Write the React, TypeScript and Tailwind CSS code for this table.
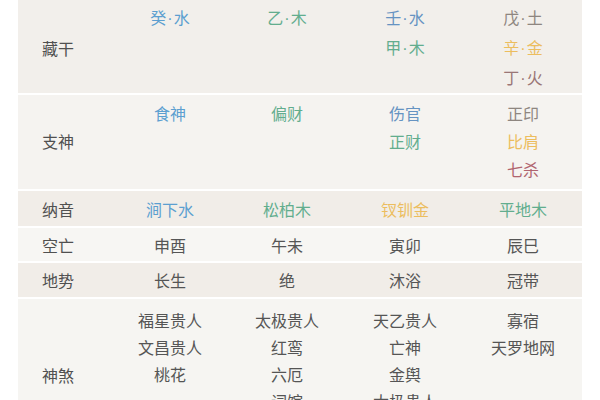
import React from "react";

type Item = { t: string; c: string };

const BLUE = "text-[#5c9fd0]";
const SLATE = "text-[#6693c2]";
const GREEN = "text-[#62ad8e]";
const GOLD = "text-[#ecbd5e]";
const EARTH = "text-[#8e8680]";
const FIRE = "text-[#9a7676]";
const RED = "text-[#b0646e]";
const DARK = "text-[#555555]";

type Row = {
  label: string;
  bg: string;
  pad: string;
  lh: string;
  cols: Item[][];
};

const rows: Row[] = [
  {
    label: "藏干",
    bg: "bg-[#f2efeb]",
    pad: "pt-[3px] pb-[6px] h-[93px]",
    lh: "leading-[28px]",
    cols: [
      [{ t: "癸·水", c: BLUE }],
      [{ t: "乙·木", c: GREEN }],
      [
        { t: "壬·水", c: SLATE },
        { t: "甲·木", c: GREEN },
      ],
      [
        { t: "戊·土", c: EARTH },
        { t: "辛·金", c: GOLD },
        { t: "丁·火", c: FIRE },
      ],
    ],
  },
  {
    label: "支神",
    bg: "bg-[#f5f3f0]",
    pad: "pt-[4px] pb-[6px] h-[94px]",
    lh: "leading-[28px]",
    cols: [
      [{ t: "食神", c: BLUE }],
      [{ t: "偏财", c: GREEN }],
      [
        { t: "伤官", c: SLATE },
        { t: "正财", c: GREEN },
      ],
      [
        { t: "正印", c: EARTH },
        { t: "比肩", c: GOLD },
        { t: "七杀", c: RED },
      ],
    ],
  },
  {
    label: "纳音",
    bg: "bg-[#f1ede8]",
    pad: "h-[35px] items-center",
    lh: "leading-[28px]",
    cols: [
      [{ t: "涧下水", c: BLUE }],
      [{ t: "松柏木", c: GREEN }],
      [{ t: "钗钏金", c: GOLD }],
      [{ t: "平地木", c: GREEN }],
    ],
  },
  {
    label: "空亡",
    bg: "bg-[#f7f6f3]",
    pad: "h-[33px] items-center",
    lh: "leading-[28px]",
    cols: [
      [{ t: "申酉", c: DARK }],
      [{ t: "午未", c: DARK }],
      [{ t: "寅卯", c: DARK }],
      [{ t: "辰巳", c: DARK }],
    ],
  },
  {
    label: "地势",
    bg: "bg-[#f1ede8]",
    pad: "h-[34px] items-center",
    lh: "leading-[28px]",
    cols: [
      [{ t: "长生", c: DARK }],
      [{ t: "绝", c: DARK }],
      [{ t: "沐浴", c: DARK }],
      [{ t: "冠带", c: DARK }],
    ],
  },
  {
    label: "神煞",
    bg: "bg-[#f6f5f2]",
    pad: "pt-[8px] pb-[7px]",
    lh: "leading-[27px]",
    cols: [
      [
        { t: "福星贵人", c: DARK },
        { t: "文昌贵人", c: DARK },
        { t: "桃花", c: DARK },
      ],
      [
        { t: "太极贵人", c: DARK },
        { t: "红鸾", c: DARK },
        { t: "六厄", c: DARK },
        { t: "词馆", c: DARK },
      ],
      [
        { t: "天乙贵人", c: DARK },
        { t: "亡神", c: DARK },
        { t: "金舆", c: DARK },
        { t: "太极贵人", c: DARK },
        { t: "国印贵人", c: DARK },
      ],
      [
        { t: "寡宿", c: DARK },
        { t: "天罗地网", c: DARK },
      ],
    ],
  },
];

function Text({ t }: { t: string }) {
  const parts = t.split("·");
  if (parts.length === 1) return <>{t}</>;
  return (
    <>
      {parts[0]}
      <span className="mx-[1px]" style={{ fontFamily: '"Liberation Sans", sans-serif' }}>
        ·
      </span>
      {parts[1]}
    </>
  );
}

export default function App() {
  return (
    <div
      className="w-[600px] h-[400px] overflow-hidden bg-white pl-[18px]"
      style={{ fontFamily: '"Noto Sans CJK SC", "Noto Sans", sans-serif' }}
    >
      <div className="w-[564px] flex flex-col gap-[2px]">
        {rows.map((r) => (
          <div
            key={r.label}
            className={`grid grid-cols-[92px_118px_118px_118px_118px] ${r.bg} ${r.pad} text-[16px]`}
          >
            <div className="flex items-center pl-[24px] text-[#505050]">
              {r.label}
            </div>
            {r.cols.map((col, i) => (
              <div key={i} className={`flex flex-col items-center ${r.lh} ${i === 0 ? "pl-[2px]" : ""}`}>
                {col.map((it, j) => (
                  <div key={j} className={it.c}>
                    <Text t={it.t} />
                  </div>
                ))}
              </div>
            ))}
          </div>
        ))}
      </div>
    </div>
  );
}
